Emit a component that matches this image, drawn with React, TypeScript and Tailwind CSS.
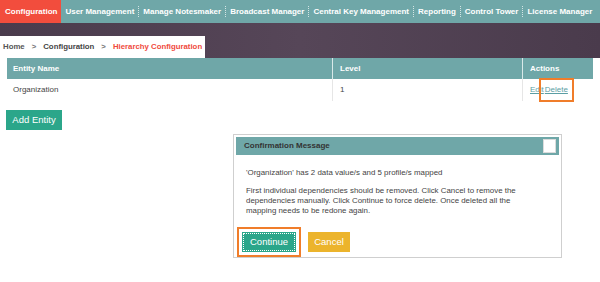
const navItems = [
  'User Management',
  'Manage Notesmaker',
  'Broadcast Manager',
  'Central Key Management',
  'Reporting',
  'Control Tower',
  'License Manager',
];

export default function App() {
  return (
    <div className="w-[600px] h-[282px] overflow-hidden bg-white font-['Liberation_Sans',Arial,sans-serif]">
      {/* top menu */}
      <div className="flex h-[23px] items-stretch whitespace-nowrap bg-[#6fa7a8] text-[8px] font-bold text-white">
        <div className="flex items-center bg-[#f24d3d] pl-[5px] pr-[4px]">Configuration</div>
        {navItems.map((item, i) => (
          <div key={item} className="flex items-center">
            {i > 0 && <span className="h-[11px] border-l border-dotted border-white/70" />}
            <span className="px-[4px]">{item}</span>
          </div>
        ))}
      </div>

      {/* dark band + breadcrumb */}
      <div className="flex h-[35px] items-end bg-gradient-to-r from-[#4a3b4c] via-[#564658] to-[#4a3b4c]">
        <div className="flex h-[22px] w-[205px] items-center gap-[7px] whitespace-nowrap bg-white pl-[3px] text-[7.8px] font-bold">
          <span className="text-[#555]">Home</span>
          <span className="text-[#777]">&gt;</span>
          <span className="text-[#444]">Configuration</span>
          <span className="text-[#777]">&gt;</span>
          <span className="text-[#f04a3c]">Hierarchy Configuration</span>
        </div>
      </div>

      {/* table */}
      <div className="mx-[7px]">
        <div className="grid h-[21px] grid-cols-[325px_190px_75px] bg-[#6fa7a8] text-[8px] font-bold text-white">
          <div className="flex items-center pl-[6px]">Entity Name</div>
          <div className="flex items-center border-l border-[#d9e9e9] pl-[7px]">Level</div>
          <div className="flex items-center border-l border-[#d9e9e9] pl-[7px]">Actions</div>
        </div>
        <div className="grid h-[22px] grid-cols-[325px_190px_75px] text-[8px] text-[#444]">
          <div className="flex items-center pl-[6px]">Organization</div>
          <div className="flex items-center border-l border-[#e6e6e6] pl-[7px]">1</div>
          <div className="flex items-center border-l border-[#e6e6e6] pl-[7px] text-[#5b9ea4] underline">
            <span>Edit</span>
            <span className="ml-[1px] outline-2 outline-offset-[4px] outline-[#f07d2a]">Delete</span>
          </div>
        </div>
      </div>

      <button className="ml-[6px] mt-[9px] flex h-[20px] w-[56px] items-center justify-center bg-[#2ba68a] text-[9.5px] text-white">
        Add Entity
      </button>

      {/* confirmation dialog */}
      <div className="ml-[233px] mt-[4px] h-[124px] w-[329px] border border-[#cfcfcf] bg-white p-[2px]">
        <div className="flex h-[18px] items-center justify-between bg-[#6fa7a8] pl-[8px] pr-[3px]">
          <span className="text-[8px] font-bold text-[#333]">Confirmation Message</span>
          <span className="h-[14px] w-[13px] border border-[#dcdcdc] bg-white" />
        </div>
        <div className="whitespace-nowrap px-[10px] pt-[13px] text-[7.9px] leading-[10px] text-[#444]">
          <p>'Organization' has 2 data value/s and 5 profile/s mapped</p>
          <p className="mt-[8px]">
            First individual dependencies should be removed. Click Cancel to remove the
            <br />
            dependencies manually. Click Continue to force delete. Once deleted all the
            <br />
            mapping needs to be redone again.
          </p>
        </div>
        <div className="mt-[11px] flex items-center gap-[7px] pl-[1px]">
          <div className="border-2 border-[#f07d2a] p-[3px]">
            <button className="flex h-[20px] w-[54px] items-center justify-center bg-[#2ba68a] text-[9.5px] text-white outline-1 -outline-offset-[2px] outline-dotted outline-white">
              Continue
            </button>
          </div>
          <button className="flex h-[20px] w-[42px] items-center justify-center bg-[#ecb42c] text-[9.5px] text-white">
            Cancel
          </button>
        </div>
      </div>
    </div>
  );
}
